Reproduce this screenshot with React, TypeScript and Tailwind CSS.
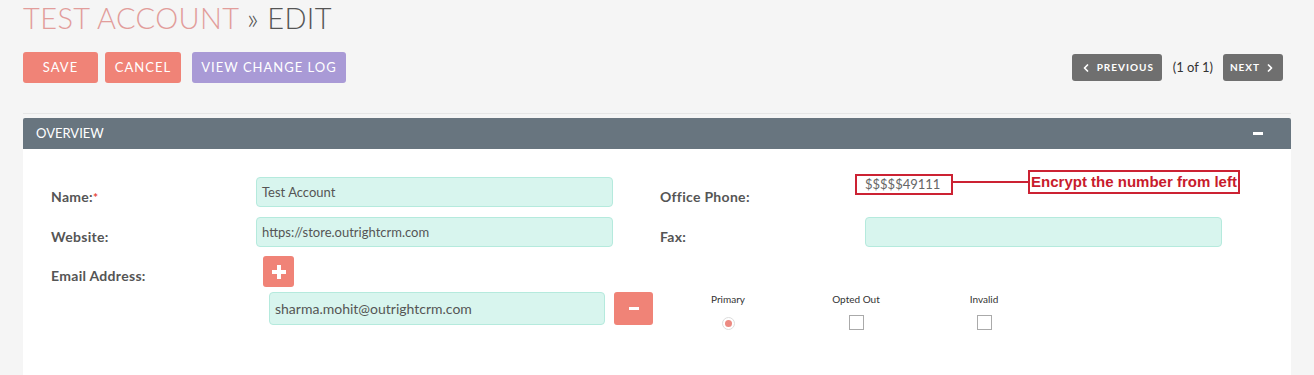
import { ChevronLeft, ChevronRight } from "lucide-react";

const label =
  "h-[30px] w-[205px] shrink-0 pt-[10px] text-[14px] font-bold leading-[20px] tracking-[0.3px] text-[#555]";
const field =
  "h-[30px] w-[357px] shrink-0 rounded-[4px] border border-[#b5eadd] bg-[#d8f5ee] px-[5px] text-[13px] leading-[28px] text-[#555]";

export default function App() {
  return (
    <div className="min-h-[375px] bg-[#f5f5f5] font-['Lato',sans-serif]">
      <div className="px-[23px]">
        <h1 className="pt-[1px] text-[29px] font-light leading-[34px] tracking-[0.4px]">
          <span className="text-[#e29d9b]">TEST ACCOUNT</span>
          <span className="text-[#555]"> » EDIT</span>
        </h1>

        <div className="mt-[17px] flex items-center justify-between pr-[8px]">
          <div className="flex items-center">
            <button className="h-[31px] w-[75px] rounded-[3px] bg-[#f08377] text-[13px] tracking-[1px] text-white">
              SAVE
            </button>
            <button className="ml-[7px] h-[31px] w-[76px] rounded-[3px] bg-[#f08377] text-[13px] tracking-[1px] text-white">
              CANCEL
            </button>
            <button className="ml-[11px] h-[31px] w-[154px] rounded-[3px] bg-[#a99ad6] text-[13px] tracking-[1px] text-white">
              VIEW CHANGE LOG
            </button>
          </div>
          <div className="flex items-center">
            <button className="flex h-[27px] w-[90px] items-center justify-center gap-[5px] rounded-[3px] bg-[#6f6f6f] text-[10px] font-bold tracking-[1px] text-white">
              <ChevronLeft size={12} strokeWidth={3.5} />
              PREVIOUS
            </button>
            <span className="ml-[11px] text-[13px] text-[#333]">(1 of 1)</span>
            <button className="ml-[10px] flex h-[27px] w-[60px] items-center justify-center gap-[4px] rounded-[3px] bg-[#6f6f6f] text-[10px] font-bold tracking-[1px] text-white">
              NEXT
              <ChevronRight size={12} strokeWidth={3.5} />
            </button>
          </div>
        </div>

        <div className="mt-[30px] border-t border-[#e6e6e6]">
          <div className="mt-[4px] flex h-[31px] items-center justify-between rounded-t-[2px] bg-[#68757f] pl-[13px] pr-[28px]">
            <span className="text-[13px] text-white">OVERVIEW</span>
            <span className="h-[3px] w-[10px] bg-white" />
          </div>

          <div className="h-[230px] bg-white pl-[28px] pt-[28px]">
            <div className="flex items-start">
              <div className={label}>
                Name:<span className="text-[12px] text-[#e8473d]">*</span>
              </div>
              <div className={field}>Test Account</div>
              <div className="w-[47px] shrink-0" />
              <div className={label}>Office Phone:</div>
              <div className="-ml-[10px] -mt-[7px] flex items-start">
                <div className="mt-[4px] h-[21px] w-[98px] border-2 border-[#cc2233] bg-white px-[8px] text-[13px] leading-[17px] text-[#666]">
                  $$$$$49111
                </div>
                <div className="mt-[11px] h-[2px] w-[75px] bg-[#cc2233]" />
                <div className="h-[24px] w-[212px] border-2 border-[#cc2233] bg-white text-center font-['Liberation_Sans',Arial,sans-serif] text-[15px] font-bold leading-[20px] text-[#c81b2c]">
                  Encrypt the number from left
                </div>
              </div>
            </div>

            <div className="mt-[10px] flex items-start">
              <div className={label}>Website:</div>
              <div className={field}>https://store.outrightcrm.com</div>
              <div className="w-[47px] shrink-0" />
              <div className={label}>Fax:</div>
              <div className={field} />
            </div>

            <div className="mt-[9px] flex items-start">
              <div className={label}>Email Address:</div>
              <button className="ml-[7px] flex h-[31px] w-[31px] items-center justify-center rounded-[3px] bg-[#f08377]">
                <svg width="14" height="14" viewBox="0 0 14 14">
                  <rect x="5" y="0" width="4" height="14" fill="white" />
                  <rect x="0" y="5" width="14" height="4" fill="white" />
                </svg>
              </button>
            </div>

            <div className="mt-[5px] flex items-start">
              <div className="w-[218px] shrink-0" />
              <div className="h-[33px] w-[336px] rounded-[4px] border border-[#b5eadd] bg-[#d8f5ee] px-[5px] text-[14px] leading-[31px] text-[#555]">
                sharma.mohit@outrightcrm.com
              </div>
              <button className="ml-[9px] flex h-[33px] w-[39px] items-center justify-center rounded-[3px] bg-[#f08377]">
                <span className="h-[3px] w-[10px] bg-white" />
              </button>
              <div className="ml-[11px] flex">
                <div className="flex w-[128px] flex-col items-center">
                  <span className="text-[10px] leading-[14px] text-[#333]">Primary</span>
                  <span className="mt-[11px] flex h-[13px] w-[13px] items-center justify-center rounded-full border border-[#ddd] bg-white">
                    <span className="h-[7px] w-[7px] rounded-full bg-[#ec8a82]" />
                  </span>
                </div>
                <div className="flex w-[128px] flex-col items-center">
                  <span className="text-[10px] leading-[14px] text-[#333]">Opted Out</span>
                  <span className="mt-[9px] h-[15px] w-[15px] border border-[#aaa] bg-white" />
                </div>
                <div className="flex w-[128px] flex-col items-center">
                  <span className="text-[10px] leading-[14px] text-[#333]">Invalid</span>
                  <span className="mt-[9px] h-[15px] w-[15px] border border-[#aaa] bg-white" />
                </div>
              </div>
            </div>
          </div>
        </div>
      </div>
    </div>
  );
}
